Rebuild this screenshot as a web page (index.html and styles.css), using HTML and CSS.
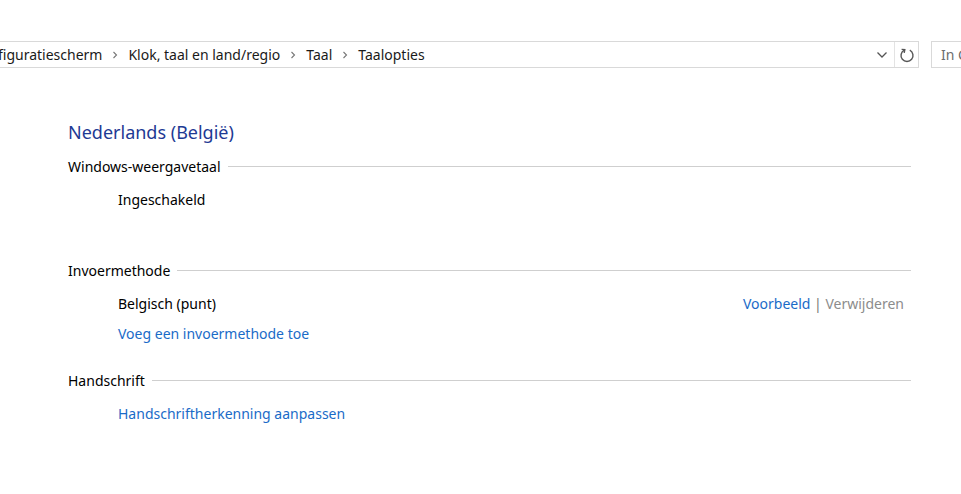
FILE: index.html
```html
<!DOCTYPE html>
<html lang="nl">
<head>
<meta charset="utf-8">
<title>Taalopties</title>
<link rel="stylesheet" href="styles.css">
</head>
<body>
<div class="toolbar">
  <div class="address">
    <div class="crumbs">
      <span class="crumb">Configuratiescherm</span>
      <span class="sep"><svg width="8" height="8" viewBox="0 0 8 8"><path d="M2.5 1 L5.5 4 L2.5 7" fill="none" stroke="#777" stroke-width="1.1"/></svg></span>
      <span class="crumb">Klok, taal en land/regio</span>
      <span class="sep"><svg width="8" height="8" viewBox="0 0 8 8"><path d="M2.5 1 L5.5 4 L2.5 7" fill="none" stroke="#777" stroke-width="1.1"/></svg></span>
      <span class="crumb">Taal</span>
      <span class="sep"><svg width="8" height="8" viewBox="0 0 8 8"><path d="M2.5 1 L5.5 4 L2.5 7" fill="none" stroke="#777" stroke-width="1.1"/></svg></span>
      <span class="crumb">Taalopties</span>
    </div>
    <div class="drop"><svg width="12" height="8" viewBox="0 0 12 8"><path d="M1.5 1.5 L6 6 L10.5 1.5" fill="none" stroke="#555" stroke-width="1.3"/></svg></div>
    <div class="refresh"><svg width="16" height="16" viewBox="0 0 16 16"><path d="M5.2 3.2 A6 6 0 1 0 10.8 3.2" fill="none" stroke="#555" stroke-width="1.4"/><path d="M2.6 2.4 L5.8 2.6 L5.2 5.8" fill="none" stroke="#555" stroke-width="1.4"/></svg></div>
  </div>
  <div class="search">In Configuratiescherm zoeken</div>
</div>

<main class="content">
  <h1 class="title">Nederlands (België)</h1>

  <section class="group">
    <div class="group-head"><span>Windows-weergavetaal</span></div>
    <div class="item">Ingeschakeld</div>
  </section>

  <section class="group g2">
    <div class="group-head"><span>Invoermethode</span></div>
    <div class="item row">
      <span>Belgisch (punt)</span>
      <span class="actions"><a class="link">Voorbeeld</a> <span class="bar">|</span> <span class="disabled">Verwijderen</span></span>
    </div>
    <div class="item"><a class="link">Voeg een invoermethode toe</a></div>
  </section>

  <section class="group g3">
    <div class="group-head"><span>Handschrift</span></div>
    <div class="item"><a class="link">Handschriftherkenning aanpassen</a></div>
  </section>
</main>
</body>
</html>
```
FILE: styles.css
```css
html, body {
  margin: 0;
  padding: 0;
  background: #fff;
  overflow: hidden;
}
body {
  font-family: "Noto Sans", "Open Sans", sans-serif;
  font-size: 14px;
  color: #000;
  width: 961px;
  height: 494px;
}
.toolbar {
  display: flex;
  align-items: center;
  margin-top: 41px;
  height: 27px;
  white-space: nowrap;
}
.address {
  display: flex;
  align-items: stretch;
  height: 25px;
  border: 1px solid #d9d9d9;
  border-left: none;
  width: 918px;
  flex: none;
  box-sizing: content-box;
}
.crumbs {
  flex: 1;
  display: flex;
  align-items: center;
  margin-left: -28px;
  overflow: hidden;
}
.crumb {
  color: #1a1a1a;
}
.sep {
  display: inline-flex;
  width: 26px;
  justify-content: center;
  align-items: center;
}
.drop {
  width: 24px;
  display: flex;
  align-items: center;
  justify-content: center;
  border-right: 1px solid #e3e3e3;
}
.refresh {
  width: 23px;
  display: flex;
  align-items: center;
  justify-content: center;
}
.search {
  margin-left: 12px;
  height: 25px;
  line-height: 25px;
  border: 1px solid #d9d9d9;
  border-right: none;
  padding-left: 9px;
  color: #6d6d6d;
  flex: 1;
  overflow: hidden;
}
.content {
  margin: 0 50px 0 68px;
  padding-top: 52px;
}
.title {
  margin: 0;
  font-weight: normal;
  font-size: 18px;
  line-height: 24px;
  color: #1e3a94;
}
.group {
  margin-top: 11px;
}
.group-head {
  display: flex;
  align-items: center;
  height: 22px;
  margin-bottom: 8px;
}
.group-head::after {
  content: "";
  flex: 1;
  height: 1px;
  background: #cfcfcf;
  margin-left: 7px;
}
.item {
  margin-left: 50px;
  height: 30px;
  line-height: 30px;
}
.g2 { margin-top: 44px; }
.g3 { margin-top: 20px; }
.row {
  display: flex;
  justify-content: space-between;
  margin-right: 7px;
}
.link {
  color: #1a6bc8;
}
.bar { color: #777; }
.disabled { color: #8c8c8c; }
```
